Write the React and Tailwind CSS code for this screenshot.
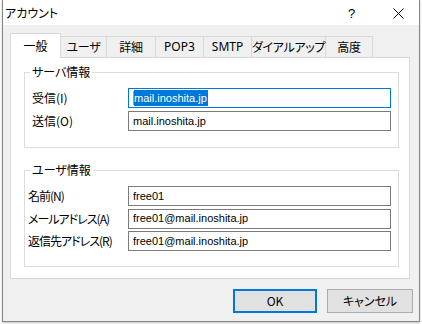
export default function App() {
  const jp = "font-['Noto_Sans_CJK_JP',sans-serif] [font-feature-settings:'palt']";
  const lat = "font-['Liberation_Sans',Arial,sans-serif]";
  const tabs = [
    { t: "ユーザ", w: "w-[46px]" },
    { t: "詳細", w: "w-[49px]" },
    { t: "POP3", w: "w-[48px]", l: true },
    { t: "SMTP", w: "w-[48px]", l: true },
    { t: "ダイアルアップ", w: "w-[74px]" },
    { t: "高度", w: "w-[47px]" },
  ];
  const Label = ({ children, narrow }) => (
    <div
      className={`w-[96px] whitespace-nowrap text-[12px] leading-[20px] text-black ${jp} ${
        narrow ? "tracking-[-1px] -ml-[4px] mr-[4px]" : ""
      }`}
    >
      {children}
    </div>
  );
  const Input = ({ children, focus }) => (
    <div
      className={`w-[263px] h-[20px] border flex items-center pl-[4px] bg-white text-[11px] text-black ${lat} ${
        focus ? "border-[#0078d7]" : "border-[#7a7a7a]"
      }`}
    >
      {children}
    </div>
  );
  return (
    <div className="w-[422px] h-[324px] bg-white pl-[2px] overflow-hidden">
      <div className="w-[418px] h-[322px] border-l border-r border-b border-[#858585] bg-[#f0f0f0] flex flex-col shadow-[0_1px_2px_rgba(0,0,0,0.25)]">
        {/* title bar */}
        <div className="h-[25px] bg-white flex items-center relative shrink-0">
          <span className={`ml-[2px] text-[12px] text-black ${jp}`}>アカウント</span>
          <span className={`absolute left-[345px] top-[4px] text-[13px] text-black ${lat}`}>?</span>
          <svg className="absolute left-[390px] top-[8px]" width="11" height="11" viewBox="0 0 11 11">
            <path d="M0.5 0.5 L10.5 10.5 M10.5 0.5 L0.5 10.5" stroke="#000" strokeWidth="1" />
          </svg>
        </div>
        {/* body */}
        <div className="flex flex-col pl-[7px] pt-[8px]">
          <div className="flex items-end h-[24px] relative z-10">
            <div className={`w-[51px] h-[25px] -mb-[1px] bg-white border border-b-0 border-[#d9d9d9] flex items-center justify-center text-[12px] text-black ${jp}`}>
              一般
            </div>
            {tabs.map((x, i) => (
              <div
                key={i}
                className={`${x.w} h-[21px] whitespace-nowrap border border-b-0 border-l-0 border-[#d9d9d9] bg-[#f0f0f0] flex items-center justify-center text-[12px] text-black ${
                  x.l ? "font-['Noto_Sans',sans-serif]" : `${jp} tracking-[-0.3px]`
                }`}
              >
                {x.t}
              </div>
            ))}
          </div>
          <div className="w-[400px] h-[222px] bg-white border border-[#d9d9d9] px-[13px] pt-[14px] flex flex-col">
            {/* server group */}
            <div className="relative w-[375px] h-[76px] border border-[#dcdcdc] pt-[15px] pl-[7px] flex flex-col gap-[3px]">
              <span className={`absolute left-[5px] -top-[10px] bg-white px-[2px] text-[12px] leading-[18px] text-black ${jp}`}>サーバ情報</span>
              <div className="flex">
                <Label>受信(I)</Label>
                <Input focus>
                  <span className="w-[1px] h-[14px] bg-[#f08a24]"></span>
                  <span className="bg-[#0078d7] text-white leading-[16px] pr-[1px]">mail.inoshita.jp</span>
                </Input>
              </div>
              <div className="flex">
                <Label>送信(O)</Label>
                <Input>mail.inoshita.jp</Input>
              </div>
            </div>
            {/* user group */}
            <div className="relative mt-[22px] w-[375px] h-[97px] border border-[#dcdcdc] pt-[15px] pl-[7px] flex flex-col gap-[2.5px]">
              <span className={`absolute left-[5px] -top-[10px] bg-white px-[2px] text-[12px] leading-[18px] text-black ${jp}`}>ユーザ情報</span>
              <div className="flex">
                <Label narrow>名前(N)</Label>
                <Input>free01</Input>
              </div>
              <div className="flex">
                <Label narrow>メールアドレス(A)</Label>
                <Input>free01@mail.inoshita.jp</Input>
              </div>
              <div className="flex">
                <Label narrow>返信先アドレス(R)</Label>
                <Input>free01@mail.inoshita.jp</Input>
              </div>
            </div>
          </div>
          {/* buttons */}
          <div className="flex justify-end gap-[10px] pr-[6px] mt-[10px]">
            <div className={`w-[84px] h-[24px] border-2 border-[#0078d7] bg-[#e1e1e1] flex items-center justify-center text-[12px] text-black ${jp}`}>
              OK
            </div>
            <div className={`w-[86px] h-[24px] border border-[#adadad] bg-[#e1e1e1] flex items-center justify-center text-[12px] text-black ${jp}`}>
              キャンセル
            </div>
          </div>
        </div>
      </div>
    </div>
  );
}
